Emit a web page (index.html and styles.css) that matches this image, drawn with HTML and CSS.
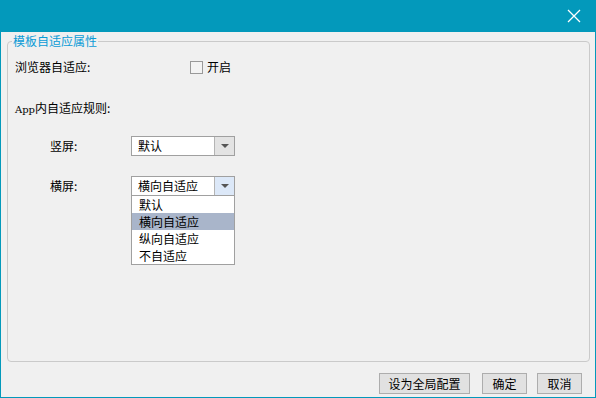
FILE: index.html
```html
<!DOCTYPE html>
<html lang="zh-CN">
<head>
    <meta charset="UTF-8">
    <meta name="viewport" content="width=device-width, initial-scale=1.0">
    <title>模板自适应属性</title>
    <link rel="stylesheet" href="styles.css">
</head>
<body>

    <div class="window">
        <div class="titlebar">
            <button class="close" aria-label="关闭">
                <svg width="14" height="14" viewBox="0 0 14 14">
                    <path d="M1 1 L13 13 M13 1 L1 13" stroke="#fff" stroke-width="1.3" fill="none"/>
                </svg>
            </button>
        </div>

        <div class="content">
            <fieldset class="group">
                <legend>模板自适应属性</legend>

                <div class="row first">
                    <span class="label wide-label">浏览器自适应:</span>
                    <span class="check"></span>
                    <span>开启</span>
                </div>

                <div class="row rules">
                    <span class="label"><span class="latin">App</span>内自适应规则:</span>
                </div>

                <div class="row combo-row">
                    <span class="label combo-label">竖屏:</span>
                    <div class="combo">
                        <span class="combo-text">默认</span>
                        <span class="arrow"></span>
                    </div>
                </div>

                <div class="row combo-row second">
                    <span class="label combo-label">横屏:</span>
                    <div class="combo open">
                        <span class="combo-text">横向自适应</span>
                        <span class="arrow"></span>
                        <ul class="dropdown">
                            <li>默认</li>
                            <li class="selected">横向自适应</li>
                            <li>纵向自适应</li>
                            <li>不自适应</li>
                        </ul>
                    </div>
                </div>
            </fieldset>

            <div class="actions">
                <button class="btn btn-wide">设为全局配置</button>
                <button class="btn">确定</button>
                <button class="btn">取消</button>
            </div>
        </div>
    </div>

</body>
</html>
```

FILE: styles.css
```css
html, body {
    margin: 0;
    padding: 0;
}
body {
    background-color: #f0f0f0;
    font-family: "Noto Sans CJK SC", "Noto Sans", sans-serif;
    font-size: 12px;
    color: #000;
}
.window {
    width: 596px;
    height: 398px;
    box-sizing: border-box;
    border: 1px solid #0399bb;
    border-top: 0;
    display: flex;
    flex-direction: column;
}
.titlebar {
    height: 32px;
    background-color: #0399bb;
    display: flex;
    justify-content: flex-end;
    align-items: flex-start;
}
.close {
    border: 0;
    background: none;
    padding: 0;
    margin: 9px 14px 0 0;
    width: 14px;
    height: 14px;
    cursor: pointer;
}
.close svg {
    display: block;
}

.content {
    flex: 1;
    display: flex;
    flex-direction: column;
    padding: 1px 5px 3px 6px;
}
.group {
    flex: 1;
    margin: 0;
    padding: 0;
    border: 1px solid #cacaca;
    border-radius: 4px;
    min-height: 0;
}
.group legend {
    color: #0a9bd6;
    line-height: 16px;
    margin-left: 4px;
    padding: 0 1px;
}

.row {
    display: flex;
    align-items: center;
    line-height: 16px;
    padding-left: 7px;
}
.row.first {
    margin-top: 10px;
}
.row.rules {
    margin-top: 25px;
}
.row.combo-row {
    margin-top: 18px;
    padding-left: 42px;
}
.row.combo-row.second {
    margin-top: 20px;
}
.wide-label {
    width: 175px;
}
.combo-label {
    width: 81px;
}
.latin {
    font-family: "DejaVu Serif", serif;
    font-size: 10px;
}
.check {
    width: 11px;
    height: 11px;
    border: 1px solid #999;
    background-color: #f3f3f3;
    margin-right: 4px;
}

.combo {
    position: relative;
    width: 104px;
    height: 20px;
    box-sizing: border-box;
    border: 1px solid #a0a0a0;
    background-color: #fff;
    display: flex;
}
.combo-text {
    flex: 1;
    padding-left: 6px;
    line-height: 18px;
}
.arrow {
    width: 19px;
    border-left: 1px solid #b4b4b4;
    background-color: #e3e3e3;
    display: flex;
    align-items: center;
    justify-content: center;
}
.arrow::after {
    content: "";
    border-left: 4px solid transparent;
    border-right: 4px solid transparent;
    border-top: 4px solid #555;
}
.combo.open .arrow {
    background-color: #dce8f8;
}
.dropdown {
    position: absolute;
    left: -1px;
    top: 18px;
    width: 104px;
    box-sizing: border-box;
    margin: 0;
    padding: 0;
    list-style: none;
    background-color: #fff;
    border: 1px solid #a0a0a0;
}
.dropdown li {
    height: 17px;
    line-height: 17px;
    padding-left: 7px;
}
.dropdown li.selected {
    background-color: #a9b5ca;
}

.actions {
    display: flex;
    justify-content: flex-end;
    gap: 10px;
    margin-top: 11px;
    padding-right: 8px;
}
.btn {
    width: 45px;
    height: 21px;
    box-sizing: border-box;
    border: 1px solid #adadad;
    background-color: #e1e1e1;
    padding: 0;
    font-family: inherit;
    font-size: 12px;
    line-height: 19px;
    text-align: center;
    color: #000;
    cursor: pointer;
}
.btn-wide {
    width: 91px;
    margin-right: 2px;
}
```
